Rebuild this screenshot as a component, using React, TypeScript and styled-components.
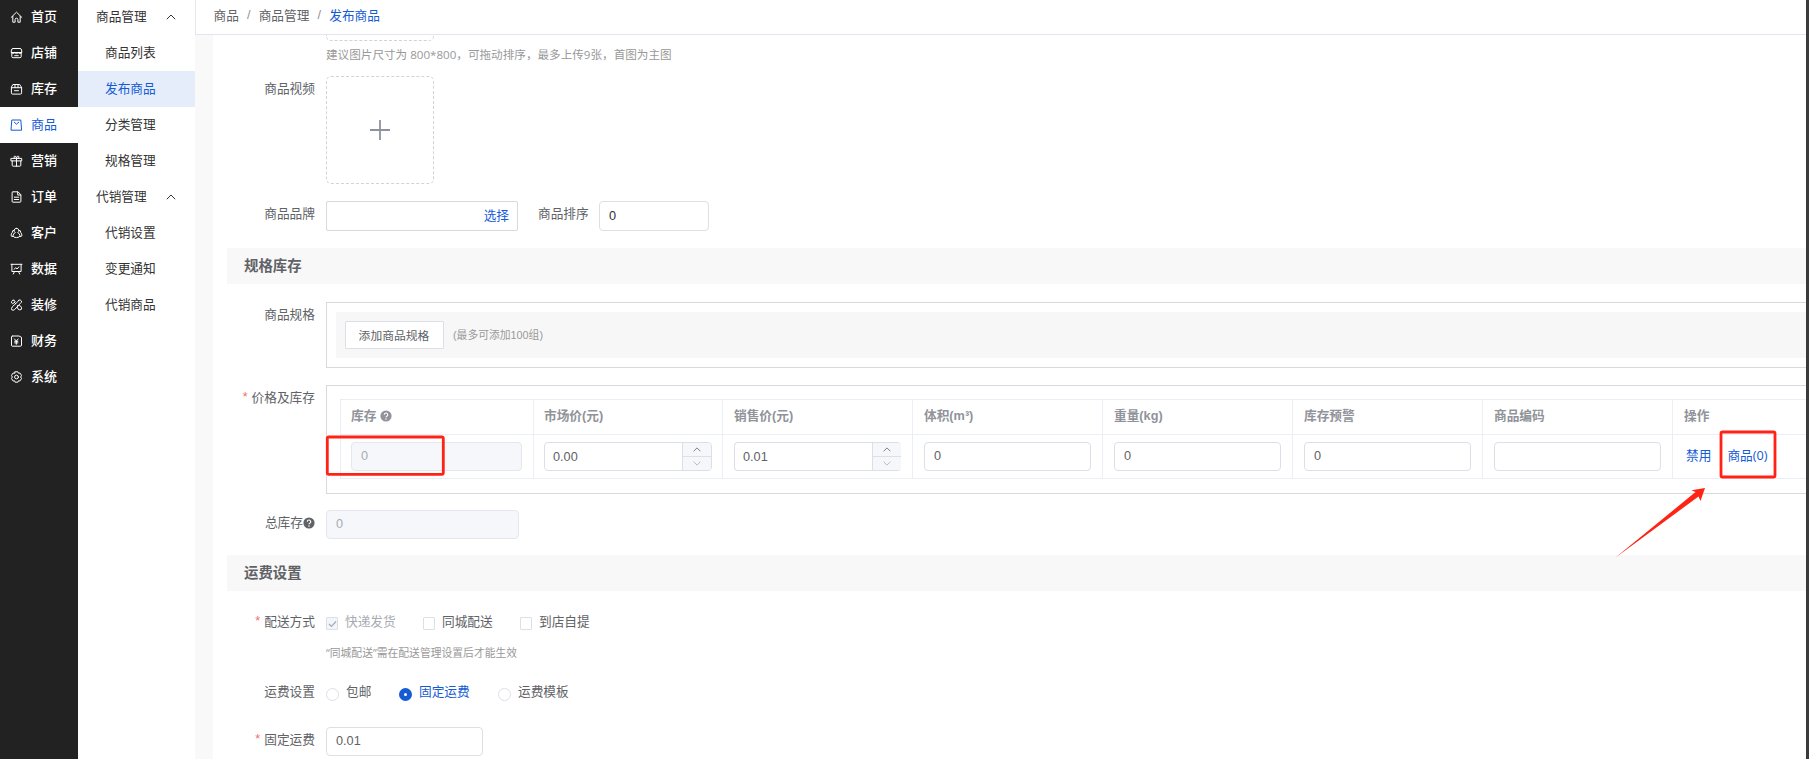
import React from "react";
import styled, { createGlobalStyle, css } from "styled-components";

const BLUE = "#155bd4";

const GlobalStyle = createGlobalStyle`
  * { box-sizing: border-box; }
  body {
    margin: 0;
    overflow: hidden;
    font-family: "Liberation Sans", "Noto Sans CJK SC", sans-serif;
    font-size: 12.7px;
    color: #606266;
    background: #fff;
  }
`;

const Page = styled.div`
  position: relative;
  display: flex;
  width: 1809px;
  height: 759px;
  overflow: hidden;
`;

const Rail = styled.nav`
  width: 78px;
  background: #222;
  flex: none;
`;

const RailItem = styled.a<{ $active?: boolean }>`
  display: flex;
  align-items: center;
  gap: 8px;
  height: 36px;
  padding: 0 0 3px 10px;
  font-size: 13px;
  color: ${(p) => (p.$active ? BLUE : "#fff")};
  background: ${(p) => (p.$active ? "#fff" : "transparent")};
  font-weight: ${(p) => (p.$active ? 400 : 500)};
  &:first-child { height: 35px; padding-bottom: 4px; }
`;

const RailIcon = styled.svg`
  width: 13px;
  height: 12px;
  margin-top: 3px;
  fill: none;
  stroke: currentColor;
  stroke-width: 1;
  stroke-linejoin: round;
  stroke-linecap: round;
`;

const SubNav = styled.nav`
  width: 117px;
  flex: none;
  color: #333;
`;

const SubGroup = styled.div`
  display: flex;
  align-items: center;
  justify-content: space-between;
  height: 36px;
  padding: 0 19px 3px 18px;
  &:first-child { height: 35px; padding-bottom: 4px; }
`;

const SubItem = styled.a<{ $active?: boolean }>`
  display: flex;
  align-items: center;
  height: 36px;
  padding: 0 0 3px 27px;
  color: ${(p) => (p.$active ? BLUE : "#333")};
  background: ${(p) => (p.$active ? "#e5edfb" : "transparent")};
`;

const Caret = styled.svg`
  fill: none;
  stroke: currentColor;
  stroke-width: 1;
  flex: none;
`;

const GroupCaret = styled.span`
  display: flex;
  margin-top: 3px;
`;

const Main = styled.main`
  flex: 1;
  min-width: 0;
  display: flex;
  flex-direction: column;
  background: #f9f9f9;
`;

const Crumbs = styled.header`
  display: flex;
  height: 35px;
  flex: none;
  padding: 0 0 6px 17.5px;
  align-items: center;
  background: #fff;
  border-left: 1px solid #e4e7ed;
  border-bottom: 1px solid #e4e4ee;
`;

const Slash = styled.span`
  width: 19.8px;
  padding-top: 2px;
  text-align: center;
  color: #909399;
`;

const Current = styled.span`
  color: ${BLUE};
`;

const Panel = styled.section`
  flex: 1;
  min-height: 0;
  margin-left: 18px;
  background: #fff;
  overflow: hidden;
`;

const Row = styled.div<{ $h: number; $mt?: number }>`
  display: flex;
  height: ${(p) => p.$h}px;
  margin-top: ${(p) => p.$mt ?? 0}px;
`;

const Label = styled.label`
  width: 102px;
  margin-right: 11px;
  flex: none;
  display: flex;
  justify-content: flex-end;
  align-items: center;
  height: 23px;
`;

const Star = styled.span`
  color: #f56c6c;
  margin-right: 4px;
`;

const Hint = styled.div<{ $h: number; $mt: number; $size: number }>`
  height: ${(p) => p.$h}px;
  line-height: ${(p) => p.$h}px;
  margin: ${(p) => p.$mt}px 0 0 113px;
  font-size: ${(p) => p.$size}px;
  font-family: "Open Sans", "Noto Sans CJK SC", sans-serif;
  color: #999;
  white-space: nowrap;
`;

const UploadTail = styled.div`
  width: 108px;
  height: 6px;
  margin-left: 113px;
  border: 1px dashed #d3d3d6;
  border-top: 0;
  border-radius: 0 0 5px 5px;
`;

const Upload = styled.div`
  width: 108px;
  height: 108px;
  border: 1px dashed #d3d3d6;
  border-radius: 5px;
  display: flex;
  align-items: center;
  justify-content: center;
  color: #8c939d;
`;

const Field = styled.div<{ $w: number; $h?: number; $disabled?: boolean; $square?: boolean }>`
  display: flex;
  align-items: center;
  flex: none;
  width: ${(p) => p.$w}px;
  height: ${(p) => p.$h ?? 29}px;
  padding: 0 9px 2px;
  border: 1px solid #dcdfe6;
  border-radius: ${(p) => (p.$square ? 2 : 4)}px;
  background: #fff;
  color: #606266;
  ${(p) =>
    p.$disabled &&
    css`
      background: #f5f7fa;
      border-color: #e4e7ed;
      color: #a8abb2;
    `}
`;

const BrandField = styled(Field)`
  justify-content: flex-end;
  color: ${BLUE};
  border-color: #d9d9dc;
  padding-right: 8px;
  padding-bottom: 4px;
`;

const SortLabel = styled.span`
  width: 81px;
  padding-left: 20px;
  line-height: 27px;
`;

const SortField = styled(Field)`
  color: #303133;
  padding-bottom: 0;
`;

const NumberBox = styled(Field)<{ $open?: boolean }>`
  justify-content: space-between;
  padding: 0 0 0 8px;
  align-items: stretch;
  overflow: hidden;
  ${(p) => p.$open && "border-right: 0;"}
`;

const NumberText = styled.span`
  line-height: 28px;
`;

const Steps = styled.div`
  display: grid;
  grid-template-rows: 13px 14px;
  width: 29px;
  border-left: 1px solid #dcdfe6;
  background: #f5f7fa;
`;

const Step = styled.div<{ $off?: boolean }>`
  display: flex;
  align-items: center;
  justify-content: center;
  color: ${(p) => (p.$off ? "#a8abb2" : "#606266")};
  & + & { border-top: 1px solid #dcdfe6; }
`;

const SectionBar = styled.h2<{ $mt: number }>`
  height: 36px;
  margin: ${(p) => p.$mt}px 0 0 14px;
  padding-left: 17px;
  line-height: 37px;
  font-size: 14.4px;
  font-weight: 700;
  background: #f8f8f8;
`;

const Frame = styled.div<{ $pad: string }>`
  flex: 1;
  border: 1px solid #d9d9dc;
  border-right: 0;
  padding: ${(p) => p.$pad};
`;

const SpecBar = styled.div`
  display: flex;
  align-items: center;
  height: 46px;
  padding-left: 9px;
  background: #f7f7f7;
`;

const AddButton = styled.button`
  width: 99px;
  height: 28px;
  padding: 0 1px 2px 0;
  border: 1px solid #dcdfe6;
  border-radius: 1px;
  background: #fff;
  color: #606266;
  font: inherit;
  font-size: 11.8px;
`;

const SpecNote = styled.span`
  margin-left: 9px;
  padding-bottom: 2px;
  font-size: 10.8px;
  color: #999;
`;

const Table = styled.div`
  display: grid;
  grid-template-columns: 193px 189px repeat(5, 190px) 1fr;
  grid-template-rows: 35px 45px;
`;

const Head = styled.div<{ $pad?: number }>`
  display: flex;
  align-items: center;
  gap: 4px;
  padding: 0 0 6px ${(p) => p.$pad ?? 11}px;
  border-left: 1px solid #ebeef5;
  border-top: 1px solid #ebeef5;
  color: #909399;
  font-weight: 700;
`;

const Cell = styled.div<{ $pad?: number }>`
  display: flex;
  padding: 7px 0 0 ${(p) => p.$pad ?? 11}px;
  border-left: 1px solid #ebeef5;
  border-top: 1px solid #ebeef5;
  border-bottom: 1px solid #ebeef5;
`;

const Link = styled.a`
  line-height: 26px;
  margin-left: 2px;
  margin-right: 14px;
  color: ${BLUE};
  font-family: "Open Sans", "Noto Sans CJK SC", sans-serif;
`;

const Option = styled.span<{ $w: number; $tone?: "muted" | "active" }>`
  display: flex;
  align-items: center;
  gap: 7px;
  height: 23px;
  width: ${(p) => p.$w}px;
  color: ${(p) => (p.$tone === "muted" ? "#a8abb2" : p.$tone === "active" ? BLUE : "#606266")};
`;

const Check = styled.i<{ $disabled?: boolean }>`
  display: flex;
  align-items: center;
  justify-content: center;
  width: 12px;
  height: 13px;
  margin-top: 6px;
  border: 1px solid #dcdfe6;
  border-radius: 1px;
  background: ${(p) => (p.$disabled ? "#f2f6fc" : "#fff")};
`;

const Radio = styled.i<{ $on?: boolean }>`
  width: 13px;
  height: 13px;
  margin-top: 7px;
  border-radius: 50%;
  background: #fff;
  border: ${(p) => (p.$on ? `5px solid ${BLUE}` : "1px solid #dcdfe6")};
`;

const Edge = styled.div`
  width: 3px;
  flex: none;
  background: #3a3a3c;
`;

const Marks = styled.svg`
  position: absolute;
  left: 0;
  top: 0;
  pointer-events: none;
`;

const Up = ({ w = 10 }: { w?: number }) => (
  <Caret width={w} height={w / 2 + 1} viewBox="0 0 10 6"><path d="M.8 5.2 5 1l4.2 4.2" /></Caret>
);
const Down = ({ w = 10 }: { w?: number }) => (
  <Caret width={w} height={w / 2 + 1} viewBox="0 0 10 6"><path d="M.8.8 5 5 9.2.8" /></Caret>
);

const HelpIcon = styled.svg`
  width: 12px;
  height: 12px;
  margin-top: 3px;
  flex: none;
`;

const Help = ({ color }: { color: string }) => (
  <HelpIcon viewBox="0 0 12 12">
    <circle cx="6" cy="6" r="5.6" fill={color} />
    <path d="M4.3 4.7a1.7 1.7 0 1 1 2.5 1.5Q6 6.6 6 7.3" fill="none" stroke="#fff" strokeWidth="1.2" />
    <circle cx="6" cy="9" r=".75" fill="#fff" />
  </HelpIcon>
);

const railItems: { text: string; icon: React.ReactNode; active?: boolean }[] = [
  { text: "首页", icon: <path d="M.7 6.4 6 1.2l5.3 5.2M2.3 5.3v5.9h2.3V8.6a1.4 1.4 0 0 1 2.8 0v2.6h2.3V5.3" /> },
  { text: "店铺", icon: <path d="M2.5 1.5h7q1.3 0 1.6 1.5l.2 2.5H.7L.9 3q.3-1.5 1.6-1.5M1.3 6v3.5q0 1.2 1.2 1.2h7q1.2 0 1.2-1.2V6M.7 5.5q1.8 2 3.5.3 1.8 1.7 3.6 0 1.7 1.7 3.5-.3M4.2 8.7h3.6" /> },
  { text: "库存", icon: <path d="M2.8 1.500h6.400l1.900 3v5.400q0 1.200-1.200 1.200H2.100Q.9 11.100.9 9.900V4.500zM.9 4.700h10.200M4.500 4.700V1.500M7.500 4.700V1.500M4 7.700h4" /> },
  { text: "商品", active: true, icon: <path d="M1.7 1h8.6l.8 10.2H.9zM3.800 3.200 6 5.200l2.200-2" /> },
  { text: "营销", icon: <path d="M.8 3.400h10.400v2.500H.8zM1.700 5.900v4.300q0 1 1 1h6.600q1 0 1-1V5.900M6 3.400v7.800M3.800 3.300Q3 1.300 4.300 1 5.600 1 6 3.200 6.400 1 7.700 1q1.300.3.5 2.300" /> },
  { text: "订单", icon: <path d="M2.5.8h5l2.900 3v6.500q0 .9-.9.9h-7q-.9 0-.9-.9V1.700q0-.9.900-.9M7.200 1v3h3M3.800 6.200h4.400M3.800 8.500h4.400" /> },
  { text: "客户", icon: <path d="M6 1.3a2.3 2.3 0 0 1 1.2 4.3q2 .7 2.3 3.2-.5 1.800-3.500 1.800T2.500 8.800q.3-2.500 2.300-3.200A2.300 2.300 0 0 1 6 1.300M3.300 3.300Q1.500 3.300 1.900 5.300.5 6.600.6 8.800q.7 1 2 .8M8.700 3.300q1.800 0 1.400 2 1.400 1.300 1.300 3.500-.7 1-2 .8" /> },
  { text: "数据", icon: <path d="M.5 1.300h11M1.400 1.300v7.200h9.200V1.300M4 8.600 2.800 11M8 8.600 9.200 11M3.700 6.300l1.500-1.700L6.600 6l1.800-2.100" /> },
  { text: "装修", icon: <path d="M2.700 1 1 2.700q-.3 1.500 1.200 2L4.700 3q-.3-2-2-2M4.300 3.800l1 1M7.500 2.300 8.300 1q1.500-.5 2.700 1 .3 1.500-1 2.200L4 10.700q-1.300.9-2.700.2-.8-1.400.2-2.700zM7.200 6.600q1.500-.7 3 .6 1.500 1.600.6 3.200-1.500 1.100-3.200-.2Q6.300 8.500 7.200 6.600" /> },
  { text: "财务", icon: <path d="M2 1h6.500l2.500 1.300v7.900q0 1-1 1H2q-1 0-1-1V2q0-1 1-1M4 4l1.800 2.100L7.600 4M5.800 6.100v3.200M4.200 6.300h3.200M4.200 7.900h3.200" /> },
  { text: "系统", icon: <><path d="M4.600.8h2.800l.5 1.400 1.500-.2L11 4.400 10.200 6l.8 1.600L9.400 10l-1.500-.2-.5 1.400H4.600l-.5-1.400-1.500.2L1 7.600 1.800 6 1 4.400 2.600 2l1.500.2z" /><circle cx="6" cy="6" r="1.900" /></> },
];

const subGroups = [
  { title: "商品管理", items: ["商品列表", "发布商品", "分类管理", "规格管理"] },
  { title: "代销管理", items: ["代销设置", "变更通知", "代销商品"] },
];

const NumberField = ({ value, w, open }: { value: string; w: number; open?: boolean }) => (
  <NumberBox $w={w} $open={open}>
    <NumberText>{value}</NumberText>
    <Steps>
      <Step><Up w={8} /></Step>
      <Step $off><Down w={8} /></Step>
    </Steps>
  </NumberBox>
);

export default function App() {
  return (
    <Page>
      <GlobalStyle />
      <Rail>
        {railItems.map((item) => (
          <RailItem key={item.text} $active={item.active}>
            <RailIcon viewBox="0 0 12 12">{item.icon}</RailIcon>
            {item.text}
          </RailItem>
        ))}
      </Rail>
      <SubNav>
        {subGroups.map((group) => (
          <React.Fragment key={group.title}>
            <SubGroup>{group.title}<GroupCaret><Up /></GroupCaret></SubGroup>
            {group.items.map((text) => (
              <SubItem key={text} $active={text === "发布商品"}>{text}</SubItem>
            ))}
          </React.Fragment>
        ))}
      </SubNav>
      <Main>
        <Crumbs>
          <span>商品</span><Slash>/</Slash><span>商品管理</span><Slash>/</Slash><Current>发布商品</Current>
        </Crumbs>
        <Panel>
          <UploadTail />
          <Hint $h={18} $mt={5} $size={11.6}>建议图片尺寸为 800*800，可拖动排序，最多上传9张，首图为主图</Hint>
          <Row $h={108} $mt={12}>
            <Label>商品视频</Label>
            <Upload>
              <svg width="22" height="22" viewBox="0 0 22 22"><path d="M11 1v20M1 11h20" stroke="currentColor" strokeWidth="1.8" /></svg>
            </Upload>
          </Row>
          <Row $h={30} $mt={17}>
            <Label>商品品牌</Label>
            <BrandField $w={192} $h={30} $square>选择</BrandField>
            <SortLabel>商品排序</SortLabel>
            <SortField $w={110} $h={30}>0</SortField>
          </Row>
          <SectionBar $mt={17}>规格库存</SectionBar>
          <Row $h={66} $mt={18}>
            <Label>商品规格</Label>
            <Frame $pad="9px 0 9px 9px">
              <SpecBar>
                <AddButton>添加商品规格</AddButton>
                <SpecNote>(最多可添加100组)</SpecNote>
              </SpecBar>
            </Frame>
          </Row>
          <Row $h={109} $mt={17}>
            <Label><Star>*</Star>价格及库存</Label>
            <Frame $pad="13px 0 0 13px">
              <Table>
                <Head $pad={10}>库存<Help color="#909399" /></Head>
                <Head $pad={10}>市场价(元)</Head>
                <Head>销售价(元)</Head>
                <Head>体积(m³)</Head>
                <Head>重量(kg)</Head>
                <Head>库存预警</Head>
                <Head>商品编码</Head>
                <Head>操作</Head>
                <Cell $pad={10}><Field $w={171} $disabled>0</Field></Cell>
                <Cell $pad={10}><NumberField value="0.00" w={168} /></Cell>
                <Cell><NumberField value="0.01" w={167} open /></Cell>
                <Cell><Field $w={167}>0</Field></Cell>
                <Cell><Field $w={167}>0</Field></Cell>
                <Cell><Field $w={167}>0</Field></Cell>
                <Cell><Field $w={167} /></Cell>
                <Cell><Link>禁用</Link><Link>商品(0)</Link></Cell>
              </Table>
            </Frame>
          </Row>
          <Row $h={29} $mt={16}>
            <Label>总库存<Help color="#606266" /></Label>
            <Field $w={193} $disabled>0</Field>
          </Row>
          <SectionBar $mt={16}>运费设置</SectionBar>
          <Row $h={26} $mt={18}>
            <Label><Star>*</Star>配送方式</Label>
            <Option $w={97} $tone="muted">
              <Check $disabled>
                <svg width="9" height="8" viewBox="0 0 9 8"><path d="M1 4l2.5 2.5L8 1.5" fill="none" stroke="#a8abb2" strokeWidth="1.2" /></svg>
              </Check>
              快递发货
            </Option>
            <Option $w={97}><Check />同城配送</Option>
            <Option $w={97}><Check />到店自提</Option>
          </Row>
          <Hint $h={18} $mt={9} $size={10.8}>“同城配送”需在配送管理设置后才能生效</Hint>
          <Row $h={26} $mt={17}>
            <Label>运费设置</Label>
            <Option $w={73}><Radio />包邮</Option>
            <Option $w={99} $tone="active"><Radio $on />固定运费</Option>
            <Option $w={99}><Radio />运费模板</Option>
          </Row>
          <Row $h={29} $mt={22}>
            <Label><Star>*</Star>固定运费</Label>
            <Field $w={157}>0.01</Field>
          </Row>
        </Panel>
      </Main>
      <Edge />
      <Marks width="1809" height="759" viewBox="0 0 1809 759">
        <g fill="none" stroke="#ff2315" strokeWidth="2.8">
          <rect x="327.3" y="437" width="116" height="37.3" rx="1.5" />
          <rect x="1721" y="432" width="54" height="45" rx="1.5" />
        </g>
        <path d="M1615 558 1695.5 492 1691.5 490.200 1705 488 1700.500 501 1698.500 496.500Z" fill="#ff2315" />
      </Marks>
    </Page>
  );
}
